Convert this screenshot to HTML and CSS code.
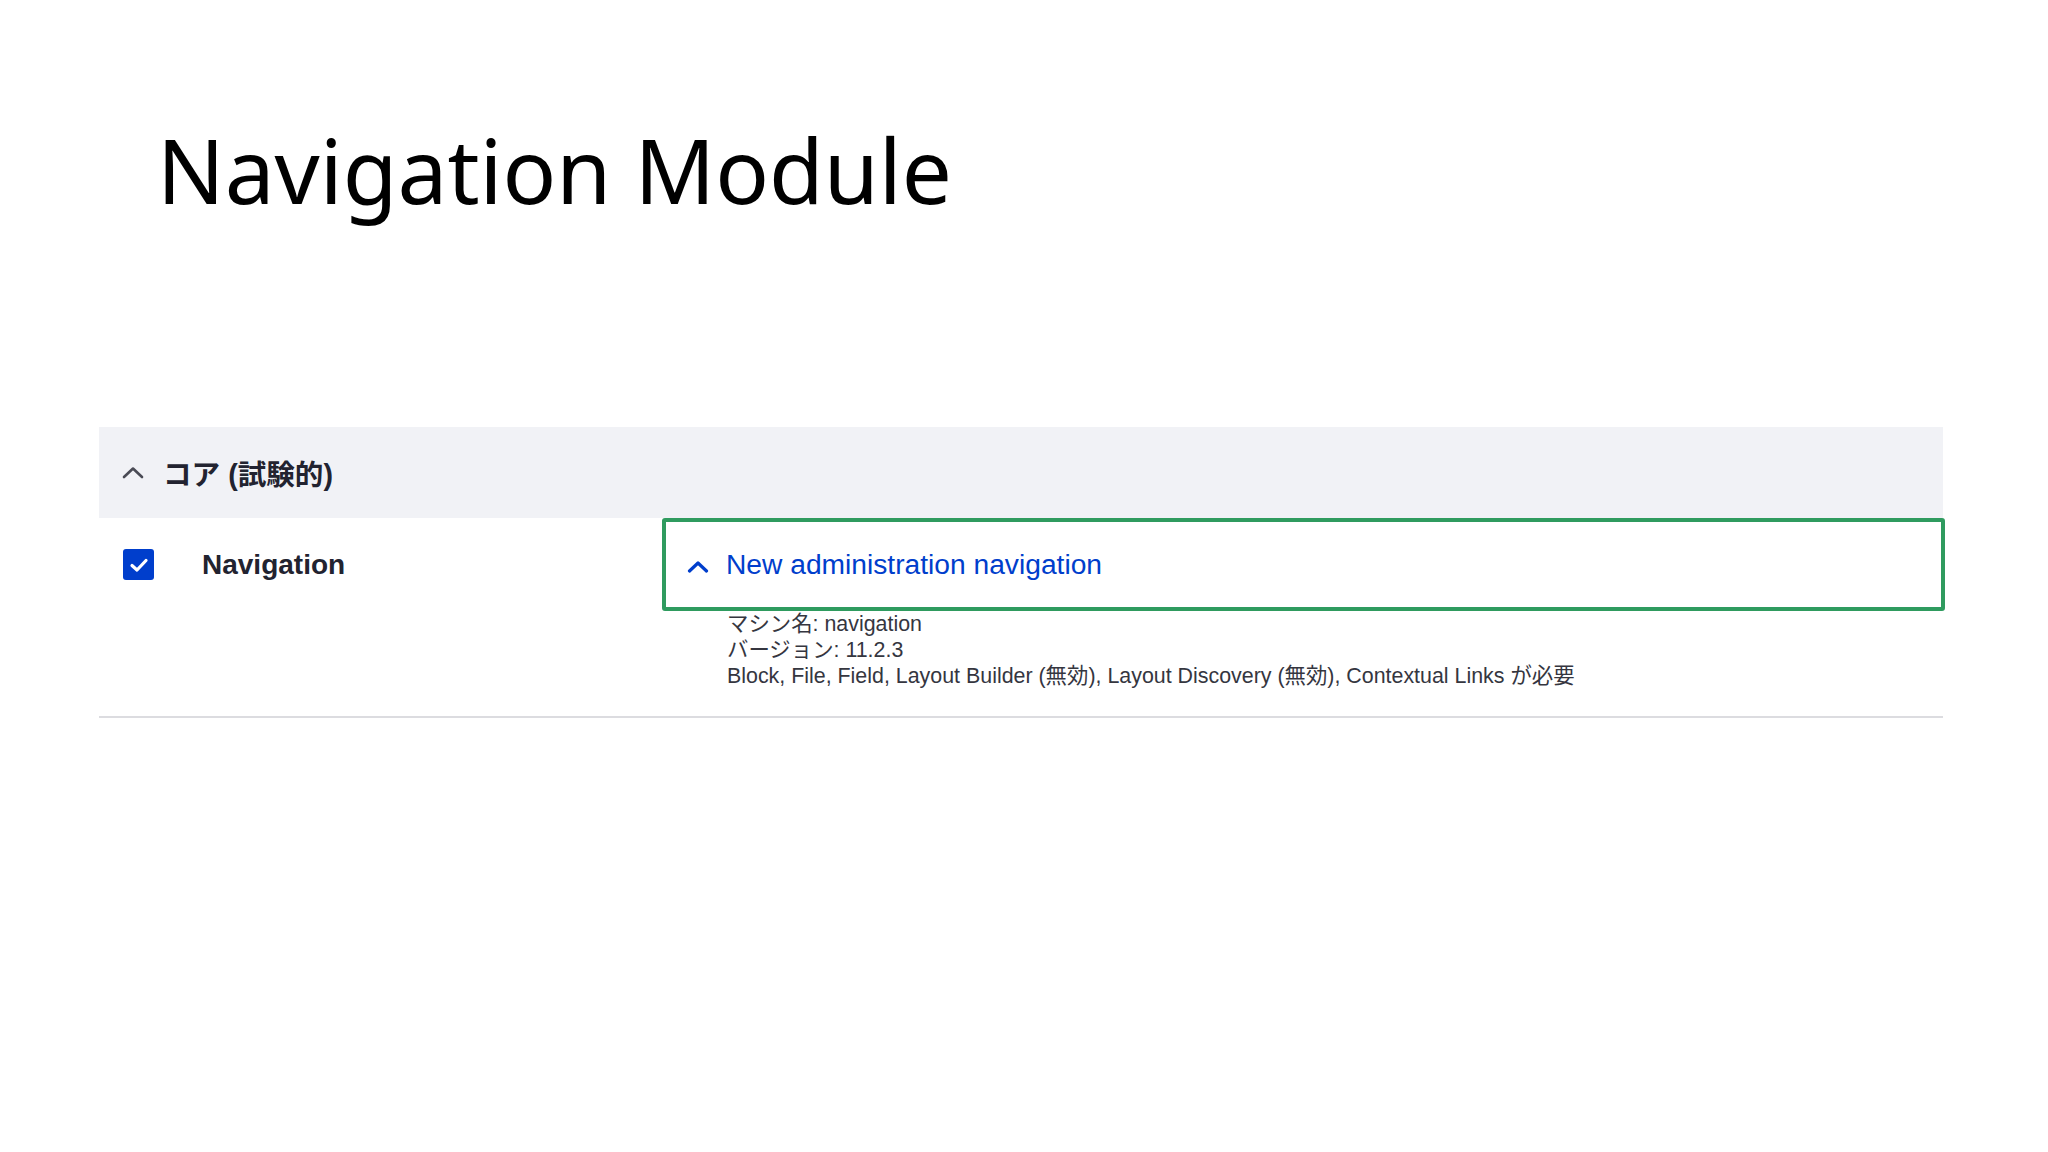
FILE: index.html
```html
<!DOCTYPE html>
<html lang="ja">
<head>
<meta charset="utf-8">
<title>Navigation Module</title>
<link rel="stylesheet" href="styles.css">
</head>
<body>
<div class="slide">
  <h1 class="title">Navigation Module</h1>
  <div class="modules">
    <div class="category">
      <svg class="chev" width="22" height="13" viewBox="0 0 22 13"><path d="M2 11 L11 2.5 L20 11" fill="none" stroke="#4a4b55" stroke-width="2.6" stroke-linecap="round" stroke-linejoin="round"/></svg>
      <span class="category-label">コア (試験的)</span>
    </div>
    <div class="module-row">
      <div class="module-name">
        <span class="checkbox">
          <svg width="20" height="16" viewBox="0 0 20 16"><path d="M3 8.5 L8 13 L17 3.5" fill="none" stroke="#fff" stroke-width="3.2" stroke-linecap="round" stroke-linejoin="round"/></svg>
        </span>
        <span class="name">Navigation</span>
      </div>
      <div class="module-details">
        <div class="summary">
          <svg class="chev-blue" width="22" height="13" viewBox="0 0 22 13"><path d="M2.5 11 L11 3 L19.5 11" fill="none" stroke="#003ecc" stroke-width="3.2" stroke-linecap="round" stroke-linejoin="round"/></svg>
          <span class="summary-text">New administration navigation</span>
        </div>
        <div class="description">
          <div>マシン名: navigation</div>
          <div>バージョン: 11.2.3</div>
          <div>Block, File, Field, Layout Builder (無効), Layout Discovery (無効), Contextual Links が必要</div>
        </div>
      </div>
    </div>
  </div>
</div>
</body>
</html>
```
FILE: styles.css
```css
html, body {
  margin: 0;
  padding: 0;
  background: #ffffff;
}
body {
  font-family: "Liberation Sans", "Noto Sans CJK JP", sans-serif;
  color: #222330;
}
.slide {
  width: 2048px;
  height: 1152px;
  padding-top: 110px;
  box-sizing: border-box;
}
.title {
  margin: 0;
  padding-left: 157px;
  font-family: "Noto Sans", "Noto Sans CJK JP", sans-serif;
  font-weight: 400;
  font-size: 89px;
  line-height: 120px;
  color: #000;
}
.modules {
  margin: 197px 0 0 99px;
  width: 1844px;
}
.category {
  height: 91px;
  background: #f1f2f6;
  display: flex;
  align-items: center;
  padding-left: 23px;
  box-sizing: border-box;
}
.chev {
  display: block;
  margin-right: 19px;
}
.category-label {
  font-family: "Liberation Sans", "Noto Sans CJK JP", sans-serif;
  font-weight: 700;
  font-size: 28.6px;
  color: #222330;
}
.module-row {
  display: flex;
  border-bottom: 2px solid #dcdce0;
  height: 200px;
  box-sizing: border-box;
}
.module-name {
  width: 563px;
  height: 93px;
  display: flex;
  align-items: center;
  padding-left: 24px;
  box-sizing: border-box;
}
.checkbox {
  width: 31px;
  height: 31px;
  border-radius: 3px;
  background: #003ecc;
  display: flex;
  align-items: center;
  justify-content: center;
  margin-right: 48px;
}
.checkbox svg {
  display: block;
}
.name {
  font-weight: 700;
  font-size: 28px;
  color: #222330;
}
.module-details {
  flex: 1;
  margin-right: -2px;
}
.summary {
  height: 93px;
  border: 4px solid #2f9b5f;
  border-radius: 3px;
  box-sizing: border-box;
  display: flex;
  align-items: center;
  padding-left: 21px;
}
.chev-blue {
  display: block;
  margin-right: 17px;
  margin-top: 4px;
}
.summary-text {
  font-size: 28.2px;
  color: #003ecc;
}
.description {
  padding-left: 65px;
  padding-top: 1px;
  font-size: 21.4px;
  line-height: 25.8px;
  color: #35363f;
}
```
